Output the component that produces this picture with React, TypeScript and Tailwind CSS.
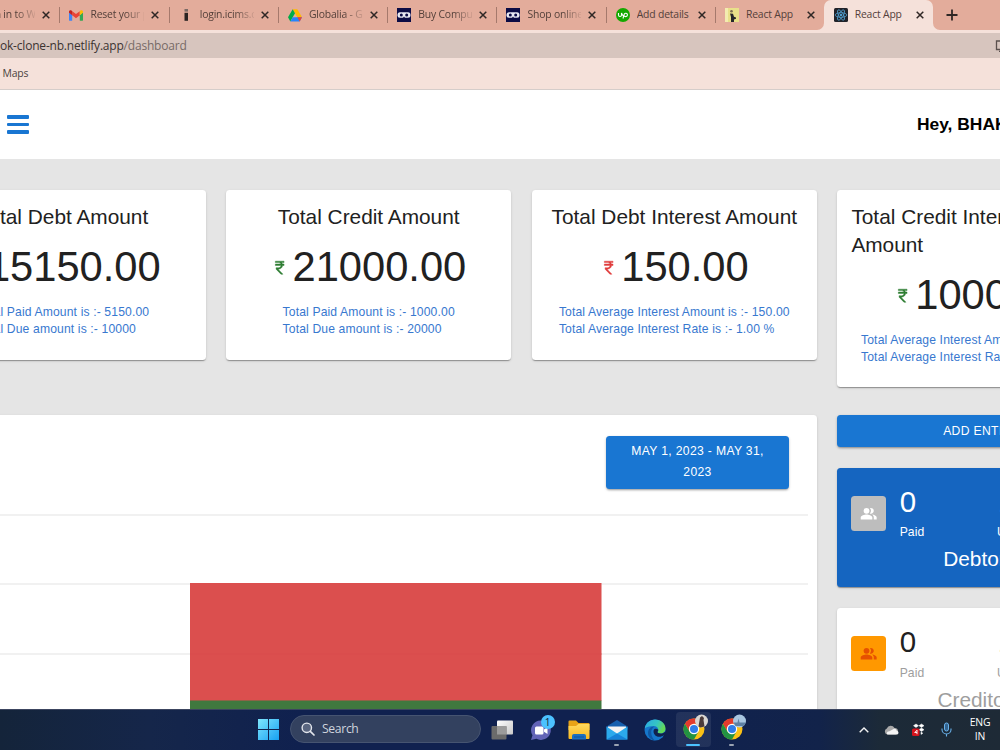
import React from "react";
import { MdPeopleAlt } from "react-icons/md";

interface Summary {
    title: string;
    amount: string;
    tone: "debt" | "credit";
    lines: string[];
}

const SUMMARIES: Summary[] = [
    {
        title: "Total Debt Amount",
        amount: "15150.00",
        tone: "debt",
        lines: ["Total Paid Amount is :- 5150.00", "Total Due amount is :- 10000"],
    },
    {
        title: "Total Credit Amount",
        amount: "21000.00",
        tone: "credit",
        lines: ["Total Paid Amount is :- 1000.00", "Total Due amount is :- 20000"],
    },
    {
        title: "Total Debt Interest Amount",
        amount: "150.00",
        tone: "debt",
        lines: ["Total Average Interest Amount is :- 150.00", "Total Average Interest Rate is :- 1.00 %"],
    },
    {
        title: "Total Credit Interest\nAmount",
        amount: "1000.00",
        tone: "credit",
        lines: ["Total Average Interest Amount is :- 1000.00", "Total Average Interest Rate is :- 1.00 %"],
    },
];

const SHADOW = "shadow-[0_2px_1px_-1px_rgba(0,0,0,0.2),0_1px_1px_rgba(0,0,0,0.14),0_1px_3px_rgba(0,0,0,0.12)]";

/* ---------- favicons ---------- */

function GmailIcon() {
    return (
        <svg viewBox="0 0 24 18" className="w-[14px] h-[11px]">
            <path d="M0 3v13.5A1.5 1.5 0 0 0 1.5 18H5.500V8.500z" fill="#4285f4" />
            <path d="M24 3v13.500a1.500 1.500 0 0 1-1.500 1.500H18.500V8.500z" fill="#34a853" />
            <path d="M5.500 1.500L12 6.500l6.500-5V8.500L12 13.500 5.500 8.500z" fill="#ea4335" />
            <path d="M0 2.500C0 .3 2.500-.8 4.300.6l1.200.9v7L0 4.400z" fill="#c5221f" />
            <path d="M24 2.500c0-2.200-2.500-3.300-4.300-1.900l-1.200.9v7L24 4.400z" fill="#fbbc04" />
        </svg>
    );
}

function IcimsIcon() {
    return (
        <svg viewBox="0 0 14 14" className="w-[14px] h-[14px]">
            <rect x="5.500" y="1" width="3.500" height="2.600" fill="#7b6a65" />
            <rect x="5.500" y="4.800" width="3.500" height="8" fill="#2b2423" />
        </svg>
    );
}

function DriveIcon() {
    return (
        <svg viewBox="0 0 87 78" className="w-[14px] h-[13px]">
            <path d="M29 0h29l29 50H58z" fill="#ffba00" />
            <path d="M29 0l14.500 25L14.500 76 0 50z" fill="#00ac47" />
            <path d="M29 50h58L72.500 77h-58z" fill="#2684fc" />
            <path d="M58 50h29L72.500 77z" fill="#ea4335" />
        </svg>
    );
}

function GogglesIcon() {
    return (
        <svg viewBox="0 0 14 14" className="w-[14px] h-[14px]">
            <rect width="14" height="14" fill="#0b0b45" />
            <rect x="0.500" y="4.300" width="13" height="5.400" rx="2.500" fill="#e8e8f2" />
            <circle cx="4.300" cy="7" r="1.500" fill="#0b0b45" />
            <circle cx="9.700" cy="7" r="1.500" fill="#0b0b45" />
            <path d="M6 10l1-1.500 1 1.500z" fill="#0b0b45" />
        </svg>
    );
}

function UpworkIcon() {
    return (
        <svg viewBox="0 0 14 14" className="w-[14px] h-[14px]">
            <circle cx="7" cy="7" r="7" fill="#14a800" />
            <path
                d="M2.500 5v2a1.500 1.500 0 0 0 3 0V5c.5 1.600 1.400 2.800 2.500 3.500M7 10.500l1.100-4A1.700 1.700 0 1 1 9.700 8.600C8.800 8.600 8 8 7.300 7.200"
                fill="none"
                stroke="#fff"
                strokeWidth="1.100"
            />
        </svg>
    );
}

function PersonIcon() {
    return (
        <svg viewBox="0 0 14 14" className="w-[14px] h-[14px]">
            <rect width="14" height="14" fill="#e9e08a" />
            <rect width="3" height="14" fill="#f3ecb0" />
            <circle cx="6.500" cy="3.200" r="1.300" fill="#7a6b50" />
            <path d="M5 5.500l3 .3 1 3 2 .8v1.200L9 11.500V14H6V9z" fill="#26262c" />
        </svg>
    );
}

function ReactIcon() {
    return (
        <svg viewBox="0 0 14 14" className="w-[14px] h-[14px]">
            <rect width="14" height="14" rx="1.500" fill="#20232a" />
            <g fill="none" stroke="#4f9fd0" strokeWidth="0.800">
                <ellipse cx="7" cy="7" rx="5.800" ry="2.300" />
                <ellipse cx="7" cy="7" rx="5.800" ry="2.300" transform="rotate(60 7 7)" />
                <ellipse cx="7" cy="7" rx="5.800" ry="2.300" transform="rotate(120 7 7)" />
            </g>
            <circle cx="7" cy="7" r="1.200" fill="#4f9fd0" />
        </svg>
    );
}

function CloseIcon() {
    return (
        <svg viewBox="0 0 8 8" className="w-[8px] h-[8px] shrink-0">
            <path d="M0.700 0.700l6.600 6.600M7.300 0.700L0.700 7.300" stroke="#2f2725" strokeWidth="1.500" />
        </svg>
    );
}

/* ---------- browser chrome ---------- */

const TABS = [
    { title: "Sign in to W", icon: null, fade: true },
    { title: "Reset your p", icon: <GmailIcon />, fade: true },
    { title: "login.icims.c", icon: <IcimsIcon />, fade: true },
    { title: "Globalia - G", icon: <DriveIcon />, fade: true },
    { title: "Buy Compu", icon: <GogglesIcon />, fade: true },
    { title: "Shop online", icon: <GogglesIcon />, fade: true },
    { title: "Add details", icon: <UpworkIcon />, fade: false },
    { title: "React App", icon: <PersonIcon />, fade: false },
];

function TabBody({ title, icon, fade }: { title: string; icon: React.ReactNode; fade: boolean }) {
    return (
        <>
            <span className="w-[14px] h-[14px] flex items-center justify-center shrink-0">{icon}</span>
            <span
                className={`ml-[7px] w-[54px] shrink-0 overflow-hidden whitespace-nowrap ${
                    fade ? "[mask-image:linear-gradient(to_right,#000_65%,transparent_105%)]" : ""
                }`}
            >
                {title}
            </span>
            <span className="ml-[7px] flex">
                <CloseIcon />
            </span>
        </>
    );
}

function TabStrip() {
    return (
        <div className="flex h-[30px] bg-[#e3ac9b] overflow-hidden text-[10.4px] tracking-[-0.18px] text-[#54403a]">
            <div className="flex shrink-0 -ml-[49.800px]">
                {TABS.map((t, i) => (
                    <div key={i} className="flex w-[109.250px] shrink-0 items-center">
                        <span className={`w-px h-4 mr-[9px] ${i === 0 ? "" : "bg-[#a5796c]"}`} />
                        <TabBody {...t} />
                    </div>
                ))}
            </div>
            <div className="relative flex w-[109px] shrink-0 items-center rounded-t-[7px] bg-[#f5e1da] pl-[9.500px]">
                <TabBody title="React App" icon={<ReactIcon />} fade={false} />
                <svg viewBox="0 0 7 7" className="absolute -left-[7px] bottom-0 w-[7px] h-[7px]">
                    <path d="M7 0v7H0a7 7 0 0 0 7-7z" fill="#f5e1da" />
                </svg>
                <svg viewBox="0 0 7 7" className="absolute -right-[7px] bottom-0 w-[7px] h-[7px]">
                    <path d="M0 0v7h7a7 7 0 0 1-7-7z" fill="#f5e1da" />
                </svg>
            </div>
            <div className="flex items-center pl-[13px]">
                <svg viewBox="0 0 12 12" className="w-[12px] h-[12px]">
                    <path d="M6 0.500v11M0.500 6h11" stroke="#2f2725" strokeWidth="1.800" />
                </svg>
            </div>
        </div>
    );
}

function BrowserChrome() {
    return (
        <header className="shrink-0 bg-[#f5e1da] font-['Open_Sans','Noto_Sans',sans-serif]">
            <TabStrip />
            <div className="mt-[3px] flex h-[25px] items-center justify-between overflow-hidden bg-[#d7c5be] pt-px text-[12px] tracking-[-0.2px] text-[#3b3331]">
                <span className="whitespace-nowrap">
                    ok-clone-nb.netlify.app<span className="text-[#776b67]">/dashboard</span>
                </span>
                <svg viewBox="0 0 12 12" className="-mr-[7px] w-[12px] h-[12px]">
                    <path d="M6 1H1.500v8.500H11M4 11.300h5" fill="none" stroke="#5b504d" strokeWidth="1.300" />
                </svg>
            </div>
            <div className="flex h-[32px] items-center border-b border-[#d5cdca] pl-[2.500px] text-[10.4px] tracking-[-0.2px] text-[#4b4340]">
                Maps
            </div>
        </header>
    );
}

/* ---------- dashboard ---------- */

function RupeeIcon({ tone }: { tone: "debt" | "credit" }) {
    return (
        <svg
            viewBox="0 0 24 24"
            className={`size-[17.400px] fill-current stroke-current stroke-[0.6] ${
                tone === "debt" ? "text-[#e03c3c]" : "text-[#2e7d32]"
            }`}
        >
            <path d="M13.660 7c-.56-1.180-1.760-2-3.160-2H6V3h12v2h-3.260c.48.58.84 1.260 1.050 2H18v2h-2.020c-.25 2.800-2.610 5-5.480 5h-.73l6.730 7h-2.770L7 14v-2h3.500c1.760 0 3.220-1.300 3.460-3H6V7h7.660z" />
        </svg>
    );
}

function SummaryCard({ title, amount, tone, lines }: Summary) {
    return (
        <section
            className={`flex w-[284.800px] shrink-0 flex-col items-center rounded-[3.500px] bg-white px-[13.900px] pt-[13.900px] pb-[20.700px] ${SHADOW}`}
        >
            <h2
                className={`text-[20.830px] leading-[27.800px] whitespace-pre-line text-[#212121] ${
                    title.includes("\n") ? "self-start" : ""
                }`}
            >
                {title}
            </h2>
            <div className="mt-[12px] flex items-center gap-1">
                <RupeeIcon tone={tone} />
                <span className="text-[41.660px] leading-[48.600px] text-[#212121]">{amount}</span>
            </div>
            <div className="mt-[12.300px] text-[12.150px] leading-[17.400px] tracking-[0.011em] whitespace-nowrap text-[#3878cf]">
                {lines.map((l) => (
                    <p key={l}>{l}</p>
                ))}
            </div>
        </section>
    );
}

function ChartCard() {
    return (
        <section className={`flex w-[897px] shrink-0 flex-col rounded-[3.500px] bg-white ${SHADOW}`}>
            <div className="flex justify-end pt-[20.500px] pr-[28px]">
                <button className="w-[183px] rounded-[3.500px] bg-[#1976d2] px-[14px] py-[5.200px] text-[12.150px] leading-[21.300px] tracking-[0.0286em] text-white shadow-[0_2px_2px_-1px_rgba(0,0,0,0.25),0_1px_3px_rgba(0,0,0,0.2)]">
                    MAY 1, 2023 - MAY 31, 2023
                </button>
            </div>
            <svg viewBox="0 0 897 260" className="mt-[21px] h-[260px] w-[897px]">
                <g fill="#e4e4e4">
                    <rect x="0" y="4.500" width="888" height="1" />
                    <rect x="0" y="73.500" width="888" height="1" />
                    <rect x="0" y="143.500" width="888" height="1" />
                </g>
                <rect x="270" y="73" width="411.500" height="118" fill="#db4f4e" />
                <rect x="270" y="143.500" width="411.500" height="1" fill="#d94d4c" />
                <rect x="270" y="190.500" width="411.500" height="60" fill="#40783f" />
            </svg>
        </section>
    );
}

function PeopleCard({ kind }: { kind: "debtors" | "creditors" }) {
    const debtors = kind === "debtors";
    return (
        <section
            className={`flex h-[119.500px] shrink-0 flex-col rounded-[3.500px] px-[13.900px] pt-[16px] ${SHADOW} ${
                debtors ? "bg-[#1565c0] text-white" : "bg-white text-[#212121]"
            }`}
        >
            <div className="flex items-start">
                <span
                    className={`mt-[12.500px] mr-[13.800px] flex size-[34.700px] items-center justify-center rounded-[3.500px] ${
                        debtors ? "bg-[#bdbdbd] text-white" : "bg-[#ff9800] text-[#e65100]"
                    }`}
                >
                    <MdPeopleAlt className="size-[17.400px]" />
                </span>
                {[
                    ["0", "Paid"],
                    ["1", "Unpaid"],
                ].map(([n, label]) => (
                    <div key={label} className="w-[97.300px] shrink-0">
                        <p className={`text-[29.500px] leading-[36.500px] ${n === "1" ? "pl-px" : ""}`}>{n}</p>
                        <p
                            className={`text-[12.150px] leading-[19px] tracking-[0.007em] ${
                                debtors ? "mt-[3px]" : "mt-[4px] text-[#9e9e9e]"
                            }`}
                        >
                            {label}
                        </p>
                    </div>
                ))}
            </div>
            <h3
                className={`mt-[3px] text-center text-[20.830px] leading-[27.800px] ${debtors ? "" : "text-[#9e9e9e]"}`}
            >
                {debtors ? "Debtors" : "Creditors"}
            </h3>
        </section>
    );
}

function Dashboard() {
    return (
        <main className="flex min-h-0 flex-1 flex-col overflow-hidden bg-[#e5e5e5] font-['Liberation_Sans',Arial,sans-serif]">
            <div className="flex h-[69px] shrink-0 items-center bg-white pl-[7px]">
                <div className="flex w-[22px] shrink-0 flex-col gap-[3.700px]">
                    <span className="h-[3.600px] rounded-[1px] bg-[#1976d2]" />
                    <span className="h-[3.600px] rounded-[1px] bg-[#1976d2]" />
                    <span className="h-[3.600px] rounded-[1px] bg-[#1976d2]" />
                </div>
                <p className="ml-[888px] shrink-0 text-[17.400px] font-bold whitespace-nowrap text-black">Hey, BHAKTI</p>
            </div>
            <div className="mt-[30.500px] -ml-[79.300px] flex shrink-0 items-start gap-[20.800px]">
                {SUMMARIES.map((s) => (
                    <SummaryCard key={s.title} {...s} />
                ))}
            </div>
            <div className="mt-[28px] -ml-[80px] flex shrink-0 gap-[20.300px]">
                <ChartCard />
                <div className="flex w-[284.800px] shrink-0 flex-col gap-[20.800px]">
                    <button className="h-[31.500px] shrink-0 rounded-[3.500px] bg-[#1976d2] pb-px text-[12.150px] tracking-[0.0286em] text-white shadow-[0_2px_2px_-1px_rgba(0,0,0,0.25),0_1px_3px_rgba(0,0,0,0.2)]">
                        ADD ENTRY
                    </button>
                    <PeopleCard kind="debtors" />
                    <PeopleCard kind="creditors" />
                </div>
            </div>
        </main>
    );
}

/* ---------- taskbar ---------- */

function ChromeLogo({ scene }: { scene: "person" | "sea" }) {
    return (
        <svg viewBox="0 0 28 28" className="h-[28px] w-[28px]">
            <circle cx="14" cy="15" r="10.500" fill="#fbc116" />
            <path d="M4.900 9.750A10.500 10.500 0 0 1 23.100 9.750L14 9.750 9.500 17.600z" fill="#e33b2e" />
            <path d="M4.900 9.750L9.450 17.600 14 20.250 18.500 17.600 14 25.500A10.500 10.500 0 0 1 4.900 9.750z" fill="#229342" />
            <circle cx="14" cy="15" r="5.200" fill="#fff" />
            <circle cx="14" cy="15" r="4" fill="#2f7de9" />
            <circle cx="21.500" cy="7" r="6.500" fill={scene === "person" ? "#d9d6d2" : "#a9c6e0"} />
            {scene === "person" ? (
                <path d="M20 3.500l2-1.500 2 2-.5 2 1 6.500-4 1-2-1z" fill="#4b3b3a" />
            ) : (
                <path d="M15.500 8.500h4l1-4 1 4h6a6.500 6.500 0 0 1-2 3.500h-8z" fill="#5d80a3" />
            )}
        </svg>
    );
}

function TaskItem({ children, mark }: { children: React.ReactNode; mark?: "idle" | "active" }) {
    return (
        <div className="relative flex h-[35px] w-[38.150px] shrink-0 items-center justify-center">
            {mark === "active" && <span className="absolute inset-x-[1.500px] inset-y-0 rounded-[4px] bg-white/8" />}
            <span className="relative flex">{children}</span>
            {mark && (
                <span
                    className={`absolute bottom-[1px] h-[2.500px] rounded-full ${
                        mark === "active" ? "w-[14px] bg-[#4cc2ff]" : "w-[5px] bg-[#9aa3b2]"
                    }`}
                />
            )}
        </div>
    );
}

function Taskbar() {
    return (
        <footer className="flex h-[41px] shrink-0 items-center border-t border-[#3c4560] bg-[linear-gradient(90deg,#14243a_0%,#15264a_15%,#10214f_30%,#10214f_66%,#12234a_82%,#1c2a38_88%,#1e2a36_100%)] pb-px font-['Open_Sans','Noto_Sans',sans-serif]">
            <svg viewBox="0 0 21 21" className="ml-[258px] h-[21px] w-[21px] shrink-0">
                <defs>
                    <linearGradient id="win" x1="0" y1="0" x2="21" y2="21" gradientUnits="userSpaceOnUse">
                        <stop offset="0" stopColor="#7fe6fd" />
                        <stop offset="1" stopColor="#16a0f2" />
                    </linearGradient>
                </defs>
                <path d="M0 0h10v10H0zM11 0h10v10H11zM0 11h10v10H0zM11 11h10v10H11z" fill="url(#win)" />
            </svg>
            <div className="mb-px ml-[11px] flex h-[28px] w-[191px] shrink-0 items-center gap-[7.500px] rounded-full border border-[#465471] bg-[#33415f] pl-[9.500px] text-[12.200px] tracking-[-0.35px] text-[#cfd4dd]">
                <svg viewBox="0 0 14 14" className="h-[14px] w-[14px]">
                    <circle cx="5.800" cy="5.800" r="4.700" fill="#5a6680" stroke="#e3e6ec" strokeWidth="1.400" />
                    <path d="M9.300 9.300L13 13" stroke="#e3e6ec" strokeWidth="1.700" strokeLinecap="round" />
                </svg>
                <span className="pt-px">Search</span>
            </div>
            <div className="ml-[2.300px] flex shrink-0">
                <TaskItem>
                    <svg viewBox="0 0 22 20" className="h-[20px] w-[22px]">
                        <defs>
                            <linearGradient id="tv" x1="0" y1="0" x2="1" y2="1">
                                <stop offset="0" stopColor="#fff" />
                                <stop offset="1" stopColor="#c9c9c9" />
                            </linearGradient>
                        </defs>
                        <rect x="6" y="0.500" width="16" height="14" rx="1" fill="url(#tv)" />
                        <rect x="0.500" y="6" width="15" height="13.500" rx="1" fill="#6b6b6b" />
                        <rect x="6" y="6" width="9.500" height="8.500" fill="#9b9b9b" />
                    </svg>
                </TaskItem>
                <TaskItem>
                    <svg viewBox="0 0 22 22" className="h-[22px] w-[22px]">
                        <path d="M11 1.500a9.700 9.700 0 1 1-4.600 18.200L1 21l1.500-4.800A9.700 9.700 0 0 1 11 1.500z" fill="#6264b7" />
                        <rect x="5" y="7.500" width="8.500" height="8" rx="1.500" fill="#fff" />
                        <path d="M14 10.500l3.500-2.500v7L14 12.700z" fill="#fff" />
                    </svg>
                    <span className="absolute -top-[4px] -right-[3px] flex size-[14px] items-center justify-center rounded-full bg-[#4cc2ff] text-[10px] leading-none text-[#14233c]">
                        1
                    </span>
                </TaskItem>
                <TaskItem>
                    <svg viewBox="0 0 22 20" className="mt-[1px] h-[20px] w-[22px]">
                        <defs>
                            <linearGradient id="fold" x1="0" y1="0" x2="0" y2="1">
                                <stop offset="0" stopColor="#ffd95e" />
                                <stop offset="1" stopColor="#f9b91f" />
                            </linearGradient>
                        </defs>
                        <path d="M0.500 1.500a1 1 0 0 1 1-1H8l2.500 2.500h10a1 1 0 0 1 1 1V10h-21z" fill="#e8a317" />
                        <path d="M0.500 6H8l2.500-2h11v14a1 1 0 0 1-1 1h-19a1 1 0 0 1-1-1z" fill="url(#fold)" />
                        <path d="M4 19.500V16a2 2 0 0 1 2-2h10a2 2 0 0 1 2 2v3.500z" fill="#1c6fc0" />
                        <rect x="6" y="16.500" width="10" height="1" fill="#0f549c" />
                    </svg>
                </TaskItem>
                <TaskItem mark="idle">
                    <svg viewBox="0 0 22 20" className="h-[20px] w-[22px]">
                        <path d="M11 0l10.500 6.500v3h-21v-3z" fill="#155fae" />
                        <path d="M2 6.500h18V12l-9 4-9-4z" fill="#f3f3f3" />
                        <path d="M0.500 6.500l10.500 7 10.500-7v13h-21z" fill="#2ba9ec" />
                        <path d="M0.500 19.500L11 13.500l10.500 6z" fill="#1682d8" />
                    </svg>
                </TaskItem>
                <TaskItem>
                    <svg viewBox="0 0 22 22" className="h-[22px] w-[22px]">
                        <defs>
                            <linearGradient id="edgeTop" x1="0" y1="0" x2="1" y2="0.400">
                                <stop offset="0" stopColor="#2ba7e4" />
                                <stop offset="0.600" stopColor="#35c4c4" />
                                <stop offset="1" stopColor="#63d957" />
                            </linearGradient>
                        </defs>
                        <circle cx="11" cy="11" r="10.500" fill="#1677cc" />
                        <path d="M0.700 9.500C1.500 4.300 5.800.5 11 .5c6 0 10.500 4.300 10.500 9 0 3.500-2.500 5-5 5-2.300 0-3-.9-3-1.500 0-.6.800-1 .8-2.300 0-2-2-3.700-4.800-3.700-4 0-7.500 1-8.800 2.500z" fill="url(#edgeTop)" />
                        <path d="M7.200 13c0-2.300 1.300-4.300 3.300-5.600-4-.2-6.500 2.800-6.500 6.500 0 4 3 7 7 7.600-2.300-1.700-3.800-4.500-3.800-8.500z" fill="#0f58a5" />
                        <path d="M9.700 11c-1 4.300 2.600 7.500 6.800 6.700 1.400-.3 2.600-.9 3.700-1.500.4-.2.600 0 .4.400L22 22V14l-1.500-1c-1 1.200-2.500 1.500-4 1.500-2.300 0-3-.9-3-1.500 0-.6.800-1 .8-2.300-1.800-1.600-3.900-1.300-4.600.3z" fill="#10224d" />
                    </svg>
                </TaskItem>
                <TaskItem mark="active">
                    <span className="-mt-[3px] flex pl-[2px]">
                        <ChromeLogo scene="person" />
                    </span>
                </TaskItem>
                <TaskItem mark="idle">
                    <span className="-mt-[3px] flex pl-[2px]">
                        <ChromeLogo scene="sea" />
                    </span>
                </TaskItem>
            </div>
            <div className="ml-auto flex shrink-0 items-center pr-[9.500px] text-[10.400px] text-white">
                <svg viewBox="0 0 10 6" className="h-[6px] w-[10px]">
                    <path d="M0.700 5.300L5 1l4.300 4.300" fill="none" stroke="#f3f3f3" strokeWidth="1.400" />
                </svg>
                <svg viewBox="0 0 15 10" className="ml-[15px] h-[10px] w-[15px]">
                    <path d="M3.500 9.500A3.200 3.200 0 0 1 2.800 3.400 4.300 4.300 0 0 1 10.500 3 3.300 3.300 0 0 1 11.500 9.500z" fill="#a9a9a9" />
                    <path d="M3.500 9.500c-1.500-1.500 0-3.500 2-3.300L10 3.800c2-.3 2.600 1.400 2.700 1.900 2.500.5 2.300 3.800-.4 3.800z" fill="#f4f4f4" />
                </svg>
                <svg viewBox="0 0 13 14" className="ml-[12.500px] h-[14px] w-[13px]">
                    <path d="M4 1l2.500 1.700L4 4.400 1.500 2.700zM9.500 1L12 2.700 9.500 4.400 7 2.700zM9.500 5L12 6.700 9.500 8.400 7 6.700zM9 9l1.800 1.200L9 11.400z" fill="#fff" stroke="#fff" strokeWidth="0.500" />
                    <rect x="0" y="5.500" width="7.500" height="7.500" rx="1.500" fill="#d3141d" />
                    <path d="M5 7.200v4M5 7.200L2.700 9.500H5" fill="none" stroke="#fff" strokeWidth="0.900" />
                </svg>
                <svg viewBox="0 0 11 15" className="ml-[16px] h-[15px] w-[11px]">
                    <rect x="3.500" y="1" width="4" height="8" rx="2" fill="#33628c" stroke="#69b1ea" strokeWidth="1" />
                    <path d="M1 6.500v1a4.500 4.500 0 0 0 9 0v-1M5.500 12v2.500" fill="none" stroke="#69b1ea" strokeWidth="1.100" />
                </svg>
                <div className="ml-[18px] text-center leading-[13.800px] tracking-[-0.1px]">
                    <p>ENG</p>
                    <p>IN</p>
                </div>
            </div>
        </footer>
    );
}

export default function App() {
    return (
        <div className="flex h-[750px] w-[1000px] flex-col overflow-hidden">
            <BrowserChrome />
            <Dashboard />
            <Taskbar />
        </div>
    );
}
